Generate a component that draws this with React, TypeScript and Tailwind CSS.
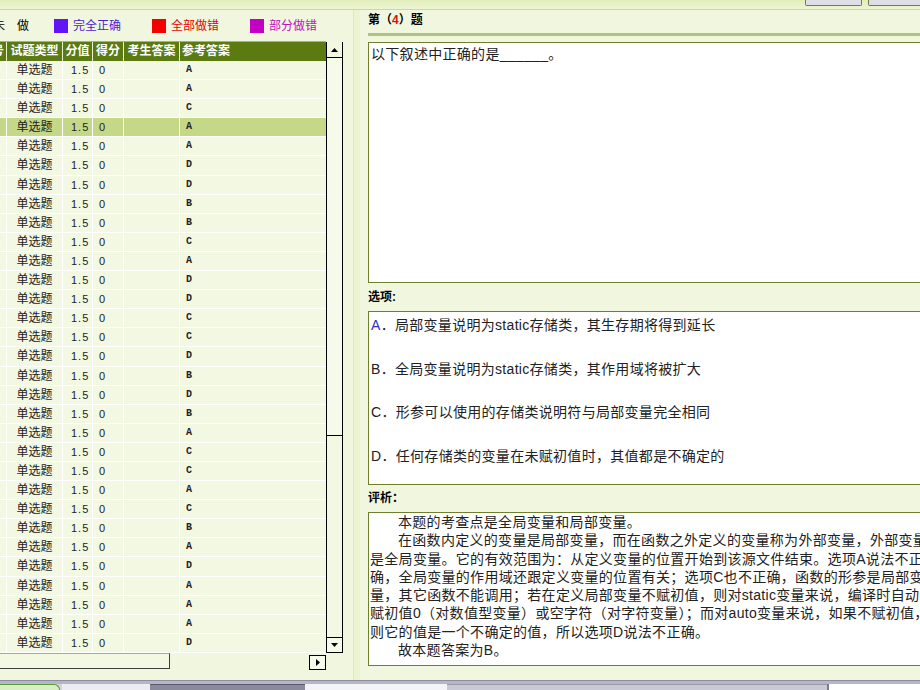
const answers = "AACAADDBBCADDCCDBDBACCACBADAAAD".split("");

const analysis: { text: string; indent?: boolean }[] = [
  { text: "本题的考查点是全局变量和局部变量。", indent: true },
  { text: "在函数内定义的变量是局部变量，而在函数之外定义的变量称为外部变量，外部变量也", indent: true },
  { text: "是全局变量。它的有效范围为：从定义变量的位置开始到该源文件结束。选项A说法不正" },
  { text: "确，全局变量的作用域还跟定义变量的位置有关；选项C也不正确，函数的形参是局部变" },
  { text: "量，其它函数不能调用；若在定义局部变量不赋初值，则对static变量来说，编译时自动" },
  { text: "赋初值0（对数值型变量）或空字符（对字符变量）；而对auto变量来说，如果不赋初值，" },
  { text: "则它的值是一个不确定的值，所以选项D说法不正确。" },
  { text: "故本题答案为B。", indent: true },
];

const options = [
  { key: "A", text: "局部变量说明为static存储类，其生存期将得到延长", blue: true },
  { key: "B", text: "全局变量说明为static存储类，其作用域将被扩大" },
  { key: "C", text: "形参可以使用的存储类说明符与局部变量完全相同" },
  { key: "D", text: "任何存储类的变量在未赋初值时，其值都是不确定的" },
];

function Arrow({ dir }: { dir: "up" | "down" | "right" }) {
  const pts = dir === "up" ? "0,4 7,4 3.5,0" : dir === "down" ? "0,0 7,0 3.5,4" : "0,0 4,3.5 0,7";
  const w = dir === "right" ? 4 : 7;
  const h = dir === "right" ? 7 : 4;
  return (
    <svg width={w} height={h} viewBox={`0 0 ${w} ${h}`}>
      <polygon points={pts} fill="#000" />
    </svg>
  );
}

export default function App() {
  return (
    <div className="w-[920px] h-[690px] overflow-hidden flex flex-col bg-[#f1f7de] text-black font-[family-name:'Liberation_Sans','Noto_Sans_CJK_SC',sans-serif]">
      {/* top strip */}
      <div className="h-[10px] shrink-0 flex bg-gradient-to-b from-[#e1eebb] to-[#ecf5d2] border-b border-[#c9d99c]">
        <div className="ml-auto w-[57px] h-[6px] bg-[#dedfe6] border-x border-b border-[#6f7f4a] rounded-b-[2px]" />
        <div className="ml-[6px] -mr-[8px] w-[60px] h-[6px] bg-[#dedfe6] border-x border-b border-[#6f7f4a] rounded-b-[2px]" />
      </div>

      <div className="flex-1 min-h-0 flex">
        {/* left pane */}
        <div className="w-[343px] shrink-0 flex flex-col">
          <div className="h-[31px] flex items-center text-[12px] leading-none whitespace-nowrap">
            <span className="-ml-[7px] w-[61px]">未　做</span>
            <div className="w-[98px] flex items-center">
              <span className="w-[14px] h-[14px] bg-[#6314f5]" />
              <span className="ml-[5px] text-[#4a22d6]">完全正确</span>
            </div>
            <div className="w-[98px] flex items-center">
              <span className="w-[14px] h-[14px] bg-[#f40000]" />
              <span className="ml-[5px] text-[#e60000]">全部做错</span>
            </div>
            <div className="flex items-center">
              <span className="w-[14px] h-[14px] bg-[#c400c4]" />
              <span className="ml-[5px] text-[#c010c0]">部分做错</span>
            </div>
          </div>

          <div className="h-[612px] flex">
            <div className="w-[326px] flex flex-col">
              <div className="h-px bg-[#a9aaa6]" />
              <div className="h-[19px] flex gap-px bg-[#e9f1d2] text-[12px] font-bold text-white leading-[19px] whitespace-nowrap">
                <div className="w-[6px] bg-[#5b7a12] overflow-hidden">
                  <span className="-ml-[8px] block">号</span>
                </div>
                <div className="w-[55px] bg-[#5b7a12] text-center">试题类型</div>
                <div className="w-[29px] bg-[#5b7a12] text-center">分值</div>
                <div className="w-[30px] bg-[#5b7a12] text-center">得分</div>
                <div className="w-[55px] bg-[#5b7a12] text-center">考生答案</div>
                <div className="flex-1 bg-[#5b7a12] pl-[2px]">参考答案</div>
              </div>
              {answers.map((a, i) => {
                const bg = i === 3 ? "bg-[#c4d888]" : "bg-[#f3f8e3]";
                return (
                  <div key={i} className="h-[19.1px] flex gap-px bg-white pb-px text-[12px] leading-[18px] text-[#222] whitespace-nowrap">
                    <div className={`w-[6px] ${bg}`} />
                    <div className={`w-[55px] ${bg} text-center`}>单选题</div>
                    <div className={`w-[29px] ${bg} pl-[8px] text-[11px] tracking-[1px]`}>1.5</div>
                    <div className={`w-[30px] ${bg} pl-[6px] text-[11px]`}>0</div>
                    <div className={`w-[55px] ${bg}`} />
                    <div className={`flex-1 ${bg} pl-[6px] text-[10px] font-bold font-[family-name:'Liberation_Mono',monospace]`}>{a}</div>
                  </div>
                );
              })}
            </div>

            {/* vertical scrollbar */}
            <div className="w-[17px] pt-px flex flex-col">
              <div className="flex-1 flex flex-col border-x border-black bg-[#f3f8e3]">
                <div className="h-[16px] border-b border-black flex items-center justify-center">
                  <Arrow dir="up" />
                </div>
                <div className="h-[378px] border-b border-black bg-[#f6faea]" />
                <div className="flex-1" />
                <div className="h-[16px] border-y border-black flex items-center justify-center bg-[#f6faea]">
                  <Arrow dir="down" />
                </div>
              </div>
            </div>
          </div>

          {/* horizontal scrollbar */}
          <div className="h-[17px] w-[326px] flex">
            <div className="w-[170px] h-[16px] bg-[#f3f8e3] border-t border-t-[#a8a8a8] border-r border-b border-[#3d3d3d]" />
            <div className="flex-1" />
            <div className="w-[17px] h-[15px] mt-[2px] border border-black flex items-center justify-center bg-[#f6faea]">
              <Arrow dir="right" />
            </div>
          </div>
        </div>

        {/* divider */}
        <div className="w-[17px] shrink-0 flex">
          <div className="ml-[10px] w-[7px] bg-[#ebf4d1] border-l border-[#dce8bb]" />
        </div>

        {/* right pane */}
        <div className="flex-1 min-w-0 overflow-hidden pl-[8px] flex flex-col">
          <div className="h-[19px] flex items-center text-[12px] font-bold leading-none whitespace-nowrap">
            第（<span className="text-[#e01010]">4</span>）题
          </div>
          <div className="mt-[4px] h-[3px] w-[600px] bg-[#b1c283]" />
          <div className="mt-[6px] h-[241px] w-[620px] shrink-0 border border-[#6e7f2e] bg-white pt-[2px] pl-[2px] text-[14px] leading-[18px] tracking-[0.3px] text-[#222]">
            以下叙述中正确的是______。
          </div>

          <div className="h-[28px] flex items-center text-[12px] font-bold leading-none">选项:</div>
          <div className="h-[174px] w-[620px] shrink-0 border border-[#6e7f2e] bg-white pt-[4px] pl-[2px] text-[14px] leading-[18px] tracking-[0.3px] text-[#222] whitespace-nowrap">
            {options.map((o) => (
              <div key={o.key} className="h-[43.7px]">
                <span className={o.blue ? "text-[#2f2fc0]" : ""}>{o.key}</span>．{o.text}
              </div>
            ))}
          </div>

          <div className="h-[27px] flex items-center pb-[2px] text-[12px] font-bold leading-none">评析：</div>
          <div className="h-[154px] w-[620px] shrink-0 border border-[#6e7f2e] bg-white text-[14px] leading-[18.3px] tracking-[0.3px] text-[#222] whitespace-nowrap overflow-hidden">
            {analysis.map((l, i) => (
              <div key={i} className={l.indent ? "pl-[29px]" : "pl-[1px]"}>
                {l.text}
              </div>
            ))}
          </div>
        </div>
      </div>

      {/* bottom bar */}
      <div className="h-[10px] shrink-0 flex flex-col border-t border-[#8d8da2] bg-[#d3d3de]">
        <div className="h-[3px] bg-[#b6b6c6]" />
        <div className="flex-1 flex">
          <div className="w-[60px] bg-[#d7efc2] border-t border-r border-[#5c9a3a] rounded-tr-[6px]" />
          <div className="ml-[2px] w-[88px] bg-[#ececf2]" />
          <div className="w-[155px] bg-[#8a8a9c] border-t border-[#5a5a6e]" />
          <div className="w-[142px] bg-[#f4f4f8]" />
          <div className="w-[380px] bg-[#c9c9d6] border-t border-[#9a9aac]" />
          <div className="flex-1 bg-white border-l-2 border-[#7a7a8a]" />
        </div>
      </div>
    </div>
  );
}
